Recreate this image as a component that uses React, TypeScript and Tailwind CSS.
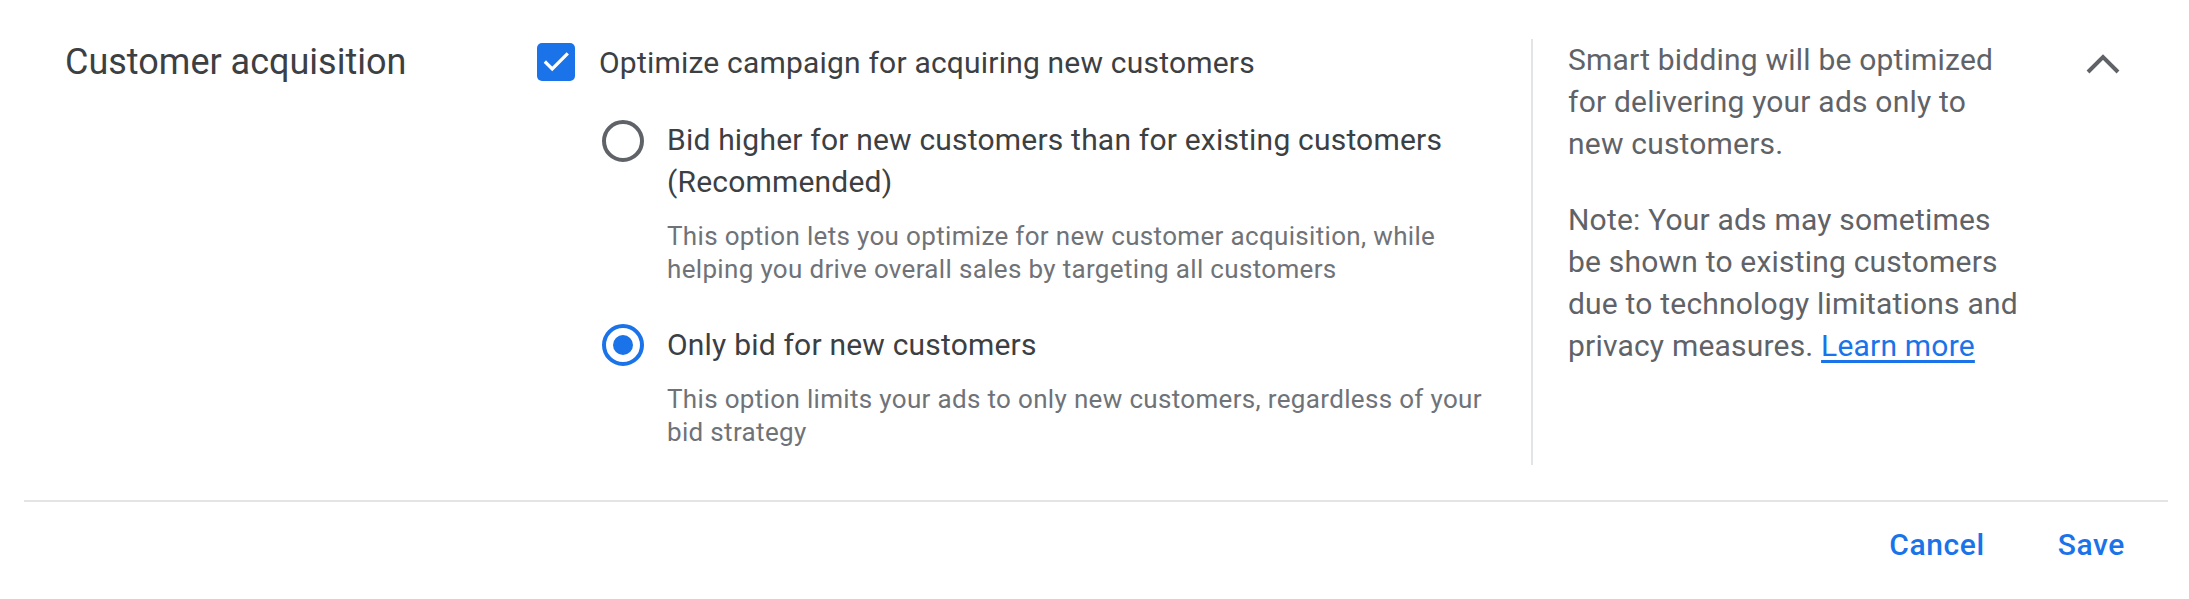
import React from "react";

function Checkbox() {
  return (
    <div className="flex h-[38px] w-[38px] shrink-0 items-center justify-center rounded-[5px] bg-[#1a73e8]">
      <svg width="30" height="30" viewBox="0 0 24 24" fill="none">
        <path
          d="M4 12.5l5 5L20.5 6"
          stroke="white"
          strokeWidth="2.6"
          strokeLinecap="square"
          strokeLinejoin="miter"
        />
      </svg>
    </div>
  );
}

function Radio({ checked }: { checked?: boolean }) {
  return checked ? (
    <div className="flex h-[42px] w-[42px] shrink-0 items-center justify-center rounded-full border-[4px] border-[#1a73e8]">
      <div className="h-[20px] w-[20px] rounded-full bg-[#1a73e8]" />
    </div>
  ) : (
    <div className="h-[42px] w-[42px] shrink-0 rounded-full border-[4px] border-[#5f6368]" />
  );
}

function Option({
  checked,
  label,
  description,
}: {
  checked?: boolean;
  label: React.ReactNode;
  description: React.ReactNode;
}) {
  return (
    <div className="flex gap-[23px]">
      <div className={checked ? "" : "mt-[1px]"}>
        <Radio checked={checked} />
      </div>
      <div>
        <p className="whitespace-nowrap text-[30px] leading-[42px] tracking-[0.2px] text-[#3c4043]">
          {label}
        </p>
        <p className="mt-[17px] whitespace-nowrap text-[26px] leading-[33px] tracking-[0.33px] text-[#6f7378]">
          {description}
        </p>
      </div>
    </div>
  );
}

export default function App() {
  return (
    <div
      className="h-[599px] w-full bg-white"
      style={{ fontFamily: "Roboto, 'Liberation Sans', sans-serif" }}
    >
      <div className="flex pt-[39px]">
        <div className="w-[537px] shrink-0 pl-[65px]">
          <h2 className="text-[36px] leading-[46px] text-[#3c4043]">
            Customer acquisition
          </h2>
        </div>

        <div className="w-[994px] shrink-0 pt-[2px] pb-[16px]">
          <div className="flex h-[42px] items-center gap-[24px]">
            <Checkbox />
            <span className="whitespace-nowrap text-[30px] tracking-[0.2px] text-[#3c4043]">
              Optimize campaign for acquiring new customers
            </span>
          </div>

          <div className="mt-[36px] space-y-[38px] pl-[65px]">
            <Option
              label={
                <>
                  Bid higher for new customers than for existing customers
                  <br />
                  (Recommended)
                </>
              }
              description={
                <>
                  This option lets you optimize for new customer acquisition, while
                  <br />
                  helping you drive overall sales by targeting all customers
                </>
              }
            />
            <Option
              checked
              label="Only bid for new customers"
              description={
                <>
                  This option limits your ads to only new customers, regardless of your
                  <br />
                  bid strategy
                </>
              }
            />
          </div>
        </div>

        <div className="w-[2px] shrink-0 bg-[#e3e4e6]" />

        <div className="flex pl-[35px]">
          <div className="w-[517px] whitespace-nowrap text-[30px] leading-[42px] tracking-[0.2px] text-[#5f6368]">
            <p>
              Smart bidding will be optimized
              <br />
              for delivering your ads only to
              <br />
              new customers.
            </p>
            <p className="mt-[34px]">
              Note: Your ads may sometimes
              <br />
              be shown to existing customers
              <br />
              due to technology limitations and
              <br />
              privacy measures.{" "}
              <a className="text-[#1a73e8] underline underline-offset-[4px]" href="#">
                Learn more
              </a>
            </p>
          </div>
          <svg
            className="mt-[14px] shrink-0"
            width="36"
            height="22"
            viewBox="0 0 36 22"
            fill="none"
          >
            <path
              d="M3 19L18 4L33 19"
              stroke="#5f6368"
              strokeWidth="4"
            />
          </svg>
        </div>
      </div>

      <div className="mt-[35px] ml-[24px] mr-[21px] h-[2px] bg-[#e3e4e6]" />

      <div className="flex justify-end gap-[73px] pt-[23px] pr-[64px]">
        <button className="text-[30px] font-medium leading-[40px] tracking-[0.6px] text-[#1a73e8]">
          Cancel
        </button>
        <button className="text-[30px] font-medium leading-[40px] tracking-[0.6px] text-[#1a73e8]">
          Save
        </button>
      </div>
    </div>
  );
}
